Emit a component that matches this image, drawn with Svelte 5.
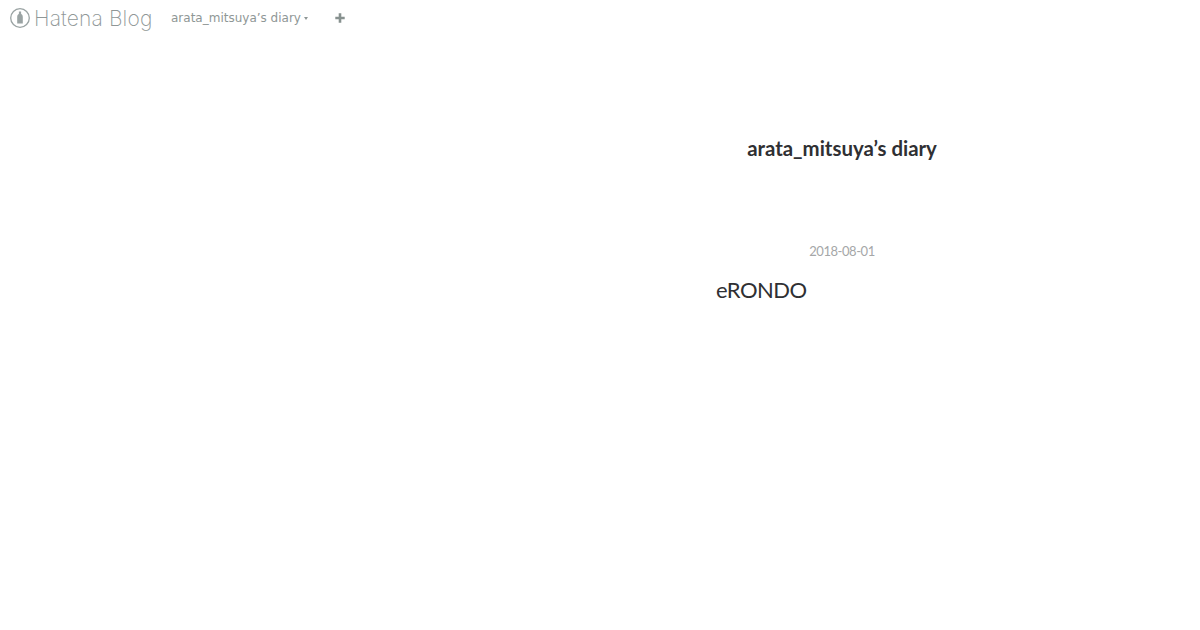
<script>
  const blogName = "arata_mitsuya’s diary";
</script>

<header class="bar">
  <a class="logo" href="#top">
    <svg class="mark" width="22" height="22" viewBox="0 0 22 22" aria-hidden="true">
      <circle cx="11" cy="11" r="9.3" fill="none" stroke="#9aa3a3" stroke-width="1.3" />
      <path d="M9.9 4.6h2.2v2.2c1.1 .8 1.7 1.8 1.7 3.1v6.7h-5.6v-6.7c0-1.3 .6-2.3 1.7-3.1z" fill="#9aa3a3" />
    </svg>
    <span class="wordmark">Hatena Blog</span>
  </a>
  <a class="blog-menu" href="#top">{blogName}<span class="caret"></span></a>
  <a class="add" href="#top" aria-label="add">
    <svg width="10" height="10" viewBox="0 0 10 10" aria-hidden="true">
      <path d="M3.7 0.3h2.6v3.4h3.4v2.6h-3.4v3.4h-2.6v-3.4h-3.4v-2.6h3.4z" fill="#87918f" />
    </svg>
  </a>
</header>

<main class="content">
  <h1 class="title">{blogName}</h1>
  <time class="date" datetime="2018-08-01">2018-08-01</time>
  <h2 class="entry">eRONDO</h2>
</main>

<style>
  :global(body) {
    margin: 0;
    background: #fff;
  }
  .bar {
    display: flex;
    align-items: center;
    height: 36px;
    padding-left: 9px;
    font-family: "DejaVu Sans", sans-serif;
  }
  a {
    text-decoration: none;
  }
  .logo {
    display: flex;
    align-items: center;
    gap: 3px;
    width: 162px;
  }
  .mark {
    flex: none;
  }
  .wordmark {
    font-family: Inter, sans-serif;
    font-weight: 200;
    font-size: 21px;
    letter-spacing: 0.15px;
    color: #8f9797;
    white-space: nowrap;
  }
  .blog-menu {
    display: flex;
    align-items: center;
    font-size: 12px;
    color: #8f9796;
    white-space: nowrap;
  }
  .caret {
    margin-left: 3px;
    border-left: 2.5px solid transparent;
    border-right: 2.5px solid transparent;
    border-top: 3px solid #8f9796;
  }
  .add {
    display: flex;
    margin-left: 27px;
  }
  .content {
    box-sizing: border-box;
    width: 252px;
    margin-left: 716px;
    font-family: Lato, sans-serif;
    color: #2f3033;
  }
  .title {
    margin: 97px 0 0;
    font-size: 20.4px;
    line-height: 30px;
    font-weight: 700;
    text-align: center;
    white-space: nowrap;
  }
  .date {
    display: block;
    margin-top: 79px;
    font-size: 13px;
    letter-spacing: -0.45px;
    line-height: 18px;
    text-align: center;
    color: #a5a7a8;
  }
  .entry {
    margin: 14px 0 0;
    font-size: 22px;
    line-height: 32px;
    font-weight: 400;
    letter-spacing: -0.5px;
  }
</style>
